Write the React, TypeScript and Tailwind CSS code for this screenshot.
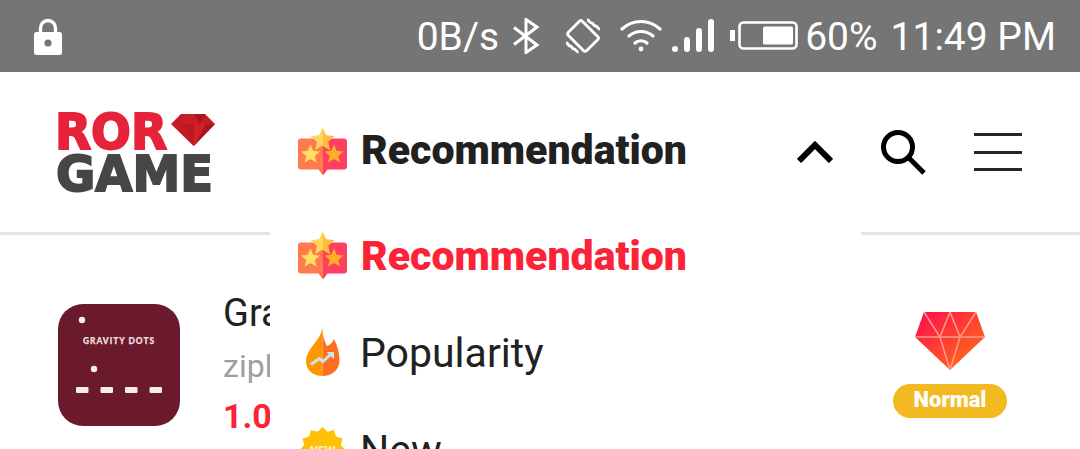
const star = (cx: number, cy: number, R: number, r: number) => {
  const p: string[] = [];
  for (let i = 0; i < 10; i++) {
    const a = -Math.PI / 2 + (i * Math.PI) / 5;
    const q = i % 2 ? r : R;
    p.push(`${(cx + q * Math.cos(a)).toFixed(2)},${(cy + q * Math.sin(a)).toFixed(2)}`);
  }
  return p.join(" ");
};

const burst = (cx: number, cy: number, R: number, r: number, n: number) => {
  const p: string[] = [];
  for (let i = 0; i < n * 2; i++) {
    const a = -Math.PI / 2 + (i * Math.PI) / n;
    const q = i % 2 ? r : R;
    p.push(`${(cx + q * Math.cos(a)).toFixed(2)},${(cy + q * Math.sin(a)).toFixed(2)}`);
  }
  return p.join(" ");
};

function StarsIcon() {
  return (
    <svg width="50" height="50" viewBox="0 0 50 50" className="shrink-0">
      <defs>
        <clipPath id="rightHalf">
          <rect x="25" y="0" width="25" height="50" />
        </clipPath>
      </defs>
      <path d="M3 11.500H25V48.500L20.500 42.500H3a3 3 0 0 1-3-3V14.500a3 3 0 0 1 3-3Z" fill="#ff7a4d" />
      <path d="M46 11.500H25V48.500L29.500 42.500H46a3 3 0 0 0 3-3V14.500a3 3 0 0 0-3-3Z" fill="#ff3f62" />
      <polygon points={star(24.5, 13, 12.5, 5.800)} fill="#ffd45f" />
      <polygon points={star(24.5, 13, 12.5, 5.800)} fill="#ffbd3a" clipPath="url(#rightHalf)" />
      <polygon points={star(12.500, 27.500, 10, 4.600)} fill="#ffdf66" />
      <polygon points={star(36, 27.500, 10, 4.600)} fill="#ffad22" />
    </svg>
  );
}

function FlameIcon() {
  return (
    <svg width="50" height="50" viewBox="0 0 50 50" className="shrink-0">
      <path d="M24.500 0C23 9 15 16 10.500 24 8.500 28 8 31 8 33 8 42 15 48 24.500 48Z" fill="#ff9800" />
      <path d="M24.500 0C24.500 7 26 13 29 18 32 17 35 14 36 11 39 17 41.500 24 41.500 32 41.500 42 34 48 24.500 48Z" fill="#ff6d1f" />
      <path d="M13 36.500 L21 30.500 L25 33.500 L33 26" fill="none" stroke="#cfe3e8" strokeWidth="3" />
      <path d="M28.500 24 H36 V31.500 Z" fill="#cfe3e8" />
    </svg>
  );
}

function NewIcon() {
  return (
    <svg width="50" height="50" viewBox="0 0 50 50" className="shrink-0">
      <polygon points={burst(24.5, 25, 23, 19, 12)} fill="#ffc107" />
      <text x="24.5" y="30" textAnchor="middle" fontFamily="Roboto, sans-serif" fontWeight="700" fontSize="12" fill="#fff3c4">
        NEW
      </text>
    </svg>
  );
}

function Logo() {
  return (
    <svg width="158" height="82" viewBox="0 0 158 82" className="shrink-0 overflow-visible">
      <text x="-3" y="37.500" textLength="112" lengthAdjust="spacingAndGlyphs" fontFamily="'DejaVu Sans', sans-serif" fontWeight="700" fontSize="50" fill="#e62338" stroke="#e62338" strokeWidth="2">
        ROR
      </text>
      <text x="-2" y="80" textLength="157" lengthAdjust="spacingAndGlyphs" fontFamily="'DejaVu Sans', sans-serif" fontWeight="700" fontSize="50" fill="#484545" stroke="#484545" strokeWidth="2">
        GAME
      </text>
      <polygon points="113,13 123,3 147,3 157,13 135.500,35" fill="#c41c22" />
      <polygon points="123,13 136,13 136,35" fill="#b81c22" />
      <polygon points="136,13 148,13 136,35" fill="#d81f25" />
      <polygon points="148,13 157,13 136,35" fill="#a51820" />
      <polygon points="128,3 136,3 142,13 122,13" fill="#c81e24" />
      <polygon points="136,3 147,3 142,13" fill="#a51820" />
    </svg>
  );
}

function GameIcon() {
  return (
    <svg width="122" height="122" viewBox="0 0 122 122" className="shrink-0">
      <rect width="122" height="122" rx="25" fill="#6b1a2e" />
      <circle cx="24" cy="16" r="3.200" fill="#f5eee8" />
      <circle cx="36" cy="65" r="3.200" fill="#f5eee8" />
      <text x="61" y="40" textAnchor="middle" fontFamily="Lato, sans-serif" fontWeight="900" fontSize="8.400" letterSpacing="1" fill="#eadfdc" stroke="#eadfdc" strokeWidth="0.250">
        GRAVITY DOTS
      </text>
      <rect x="18" y="83" width="12.500" height="6" rx="1" fill="#f5eee8" />
      <rect x="42.500" y="83" width="12.500" height="6" rx="1" fill="#f5eee8" />
      <rect x="67" y="83" width="12.500" height="6" rx="1" fill="#f5eee8" />
      <rect x="91.500" y="83" width="12.500" height="6" rx="1" fill="#f5eee8" />
    </svg>
  );
}

function Gem() {
  return (
    <svg width="70" height="58" viewBox="0 0 70 58">
      <defs>
        <linearGradient id="gemg" x1="0" y1="0" x2="1" y2="1">
          <stop offset="0" stopColor="#ff0a50" />
          <stop offset="1" stopColor="#ff7a10" />
        </linearGradient>
      </defs>
      <polygon points="9,0 61,0 70,25 35,58 0,25" fill="url(#gemg)" />
      <path d="M0 25H70M9 0L25 25L35 58L45 25L61 0M25 25L35 0L45 25" fill="none" stroke="#ff9a8c" strokeWidth="1.600" />
    </svg>
  );
}

export default function App() {
  return (
    <div className="relative h-[449px] w-[1080px] overflow-hidden bg-white font-['Roboto',sans-serif]">
      {/* status bar */}
      <div className="flex h-[72px] items-center bg-[#757575] pl-[34px] pr-[24px] text-[39px] leading-none text-white">
        <svg width="28" height="37" viewBox="0 0 28 37" className="shrink-0">
          <path d="M6.500 15V10a7.500 7.500 0 0 1 15 0v5" fill="none" stroke="#fff" strokeWidth="3.400" />
          <rect x="0" y="14" width="28" height="23" rx="2.500" fill="#fff" />
          <circle cx="14" cy="25" r="3.600" fill="#757575" />
        </svg>
        <span className="ml-auto mt-[2px]">0B/s</span>
        <svg width="28" height="36" viewBox="0 0 28 36" className="ml-[13px] shrink-0" fill="none" stroke="#fff" strokeWidth="3">
          <path d="M2 9.500L25 27 14 34.500V1.500L25 9 2 26.500" />
        </svg>
        <svg width="38" height="38" viewBox="0 0 38 38" className="ml-[24px] shrink-0" fill="none" stroke="#fff" strokeWidth="2.800">
          <rect x="9" y="6" width="20" height="26" rx="2" transform="rotate(-45 19 19)" />
          <path d="M23 3c3 0 2 3 4.500 3S29 9 31.500 9 33 12 36 12" />
          <path d="M2 26c3 0 1.500 3 4 3s1.500 3 4 3 1.500 3 4.500 3" />
        </svg>
        <svg width="42" height="34" viewBox="0 0 42 34" className="ml-[18px] shrink-0" fill="none" stroke="#fff" strokeWidth="3.200" strokeLinecap="round">
          <path d="M2 10C13 0 29 0 40 10" />
          <path d="M9 17C16 11 26 11 33 17" />
          <path d="M15 24C18 21 24 21 27 24" />
          <circle cx="21" cy="30" r="2.400" fill="#fff" stroke="none" />
        </svg>
        <svg width="42" height="34" viewBox="0 0 42 34" className="ml-[10px] shrink-0" fill="#fff">
          <rect x="0" y="27" width="6" height="6" rx="3" />
          <rect x="12" y="18" width="6" height="15" rx="3" />
          <rect x="24" y="9" width="6" height="24" rx="3" />
          <rect x="36" y="0" width="6" height="33" rx="3" />
        </svg>
        <svg width="68" height="30" viewBox="0 0 68 30" className="ml-[16px] shrink-0">
          <rect x="0" y="9" width="5" height="11" fill="#fff" />
          <rect x="9.500" y="1.500" width="57" height="26" rx="4" fill="none" stroke="#fff" strokeWidth="2.600" />
          <rect x="33" y="5.500" width="30" height="18" rx="1.500" fill="#fff" />
        </svg>
        <span className="ml-[7px] mt-[2px]">60%</span>
        <span className="ml-[13px] mt-[2px]">11:49 PM</span>
      </div>

      {/* header */}
      <div className="flex h-[163px] items-center border-b-[3px] border-[#e5e5e5] pl-[58px]">
        <Logo />
        <div className="ml-[82px] flex items-center gap-[13px]">
          <StarsIcon />
          <span className="-mt-[3px] text-[41px] font-black leading-none text-[#212121]">Recommendation</span>
        </div>
        <svg width="36" height="22" viewBox="0 0 36 22" className="ml-[110px] shrink-0" fill="none" stroke="#000" strokeWidth="6">
          <path d="M2 20L18 4L34 20" />
        </svg>
        <svg width="46" height="46" viewBox="0 0 46 46" className="ml-[47px] shrink-0" fill="none" stroke="#000">
          <circle cx="18" cy="18" r="14.500" strokeWidth="5" />
          <path d="M28 28L44 44" strokeWidth="5" />
        </svg>
        <div className="ml-[48px] flex h-[38px] w-[48px] flex-col justify-between">
          <div className="h-[3px] bg-[#222828]" />
          <div className="h-[3px] bg-[#222828]" />
          <div className="h-[3px] bg-[#222828]" />
        </div>
      </div>

      {/* list row */}
      <div className="flex items-start pl-[58px] pt-[69px]">
        <GameIcon />
        <div className="ml-[45px] -mt-[12px] flex w-[668px] flex-col">
          <span className="-ml-[2px] text-[38px] leading-[42px] text-[#212121]">Gravity Dots</span>
          <span className="-ml-[2px] mt-[14px] text-[32px] leading-[36px] text-[#9e9e9e]">zipline</span>
          <span className="-ml-[2px] mt-[13px] text-[34px] font-bold leading-[38px] text-[#fc2338]">1.0.0</span>
        </div>
        <div className="mt-[8px] flex w-[114px] flex-col items-center">
          <Gem />
          <span className="mt-[14px] flex h-[34px] w-[114px] items-center justify-center rounded-full bg-[#f3b922] pb-[3px] text-[22px] font-black text-white">
            Normal
          </span>
        </div>
      </div>

      {/* dropdown */}
      <div className="absolute left-[270px] top-[232px] flex h-[300px] w-[591px] flex-col gap-[49px] bg-white pl-[28px]">
        <div className="flex h-[48px] items-center gap-[13px]">
          <StarsIcon />
          <span className="text-[41px] font-black leading-none text-[#fc2338]">Recommendation</span>
        </div>
        <div className="flex h-[48px] items-center gap-[12px]">
          <FlameIcon />
          <span className="text-[41px] leading-none text-[#212121]">Popularity</span>
        </div>
        <div className="flex h-[48px] items-center gap-[12px]">
          <NewIcon />
          <span className="text-[41px] leading-none text-[#212121]">New</span>
        </div>
      </div>
    </div>
  );
}
